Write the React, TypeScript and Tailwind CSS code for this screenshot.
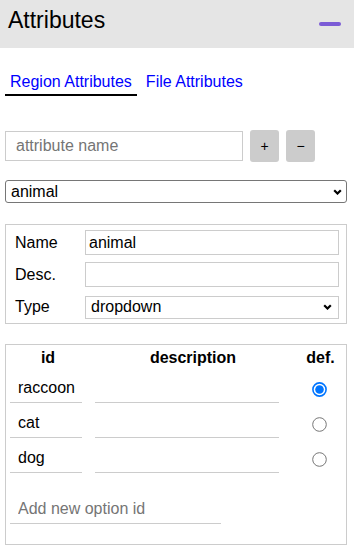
import React from 'react';

const OPTIONS = [
  { id: 'raccoon', checked: true },
  { id: 'cat', checked: false },
  { id: 'dog', checked: false },
];

const Chevron = () => (
  <svg width="9" height="6" viewBox="0 0 9 6" className="shrink-0">
    <path d="M1.2 1.2 L4.5 4.5 L7.8 1.2" fill="none" stroke="#000" strokeWidth="2.2" />
  </svg>
);

const Radio = ({ checked }: { checked: boolean }) =>
  checked ? (
    <svg width="15" height="15" viewBox="0 0 15 15">
      <circle cx="7.5" cy="7.5" r="6.6" fill="#fff" stroke="#0075ff" strokeWidth="1.6" />
      <circle cx="7.5" cy="7.5" r="4.3" fill="#0075ff" />
    </svg>
  ) : (
    <svg width="15" height="15" viewBox="0 0 15 15">
      <circle cx="7.5" cy="7.5" r="6.8" fill="#fff" stroke="#767676" strokeWidth="1" />
    </svg>
  );

export default function App() {
  return (
    <div className="w-[354px] h-[554px] overflow-hidden bg-white text-black font-['Liberation_Sans',Arial,sans-serif] text-[16px]">
      {/* Header */}
      <div className="h-12 bg-[#e5e5e5] flex justify-between items-start pl-2 pr-[13px]">
        <div className="mt-[7px] text-[23px] leading-[26px]">Attributes</div>
        <div className="mt-[22px] w-[22px] h-[4px] rounded-full bg-[#7b5bd6]" />
      </div>

      <div className="pl-[5px] pr-[7px] flex flex-col">
        {/* Tabs */}
        <div className="mt-[25px] flex gap-[4px] text-[#0000ff] leading-[18px]">
          <div className="px-[5px] pb-[3px] border-b-2 border-black">Region Attributes</div>
          <div className="px-[5px] pb-[3px]">File Attributes</div>
        </div>

        {/* New attribute */}
        <div className="mt-[34px] flex items-center gap-[7px]">
          <input
            className="w-[238px] h-[30px] border border-[#cccccc] pl-[10px] outline-none placeholder:text-[#757575]"
            placeholder="attribute name"
          />
          <button className="w-[29px] h-[32px] rounded-[3px] bg-[#cccccc] text-[14px]">+</button>
          <button className="w-[29px] h-[32px] rounded-[3px] bg-[#cccccc] text-[14px]">−</button>
        </div>

        {/* Attribute select */}
        <div className="mt-[18px] h-[23px] border border-[#767676] rounded-[3px] flex items-center justify-between pl-[5px] pr-[4px]">
          <span>animal</span>
          <Chevron />
        </div>

        {/* Attribute properties */}
        <div className="mt-[21px] border border-[#cccccc] pt-[5px] pb-[4px] pl-[9px] pr-[7px] grid grid-cols-[70px_1fr] gap-y-[7px] items-center">
          <div>Name</div>
          <input className="h-[25px] border border-[#cccccc] pl-[3px] outline-none" defaultValue="animal" />
          <div>Desc.</div>
          <input className="h-[25px] border border-[#cccccc] pl-[3px] outline-none" />
          <div className="mt-[1px]">Type</div>
          <div className="mt-[1px] h-[23px] border border-[#cccccc] flex items-center justify-between pl-[5px] pr-[6px]">
            <span>dropdown</span>
            <Chevron />
          </div>
        </div>

        {/* Options */}
        <div className="mt-[20px] border border-[#cccccc] pt-[4px] pb-[20px]">
          <div className="pl-[4px] pr-[5px] grid grid-cols-[76px_214px_1fr] font-bold leading-[18px] text-center">
            <div>id</div>
            <div>description</div>
            <div>def.</div>
          </div>
          <div className="mt-[8px] flex flex-col gap-[7px]">
            {OPTIONS.map((o) => (
              <div key={o.id} className="pl-[4px] grid grid-cols-[72px_184px_1fr] gap-x-[13px] items-center">
                <input
                  className="pt-[4px] pb-[5px] leading-[18px] pl-[8px] border-b border-[#cccccc] outline-none w-full"
                  defaultValue={o.id}
                />
                <input className="pt-[4px] pb-[5px] leading-[18px] pl-[8px] border-b border-[#cccccc] outline-none w-full" />
                <div className="flex justify-center">
                  <Radio checked={o.checked} />
                </div>
              </div>
            ))}
          </div>
          <div className="mt-[23px] pl-[4px]">
            <input
              className="w-[211px] pt-[4px] pb-[5px] leading-[18px] pl-[8px] border-b border-[#cccccc] outline-none placeholder:text-[#757575]"
              placeholder="Add new option id"
            />
          </div>
        </div>
      </div>
    </div>
  );
}
